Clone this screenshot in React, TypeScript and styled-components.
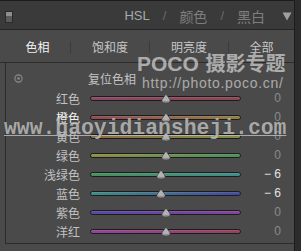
import React from 'react';
import styled, { createGlobalStyle } from 'styled-components';

const GlobalStyle = createGlobalStyle`
  html, body { margin: 0; padding: 0; width: 301px; height: 251px; overflow: hidden; background: #2c2c2c; }
  #root { width: 301px; height: 251px; }
`;

const Frame = styled.div`
  position: relative;
  width: 295px;
  height: 251px;
  box-sizing: border-box;
  border-top: 1px solid #1c1c1c;
  border-right: 1px solid #1c1c1c;
  background: #3a3a3a;
  display: flex;
  flex-direction: column;
  font-family: "Noto Sans CJK SC", "Noto Sans", sans-serif;
  overflow: hidden;
`;

const Header = styled.div`
  height: 28px;
  border-bottom: 1px solid #252525;
  display: flex;
  align-items: center;
  padding: 0 2px 0 5px;
  gap: 13px;
`;

const PanelIcon = styled.div`
  width: 8px;
  height: 12px;
  margin-top: 3px;
  box-sizing: border-box;
  border: 1px solid #2a2a2a;
  background: linear-gradient(#8e8e8e 0 45%, #5a5a5a 45% 100%);
`;

const Spacer = styled.div`
  flex: 1;
`;

const ModeLabel = styled.span<{ $active?: boolean; $latin?: boolean }>`
  font-family: ${(p) => (p.$latin ? '"Liberation Sans", Arial, sans-serif' : '"Noto Sans CJK SC", sans-serif')};
  font-size: ${(p) => (p.$latin ? '13px' : '14px')};
  color: ${(p) => (p.$active ? '#a8a8a8' : '#7e7e7e')};
  line-height: 16px;
  margin-top: 2px;
`;

const Slash = styled.span`
  font-family: "Liberation Sans", Arial, sans-serif;
  font-size: 13px;
  color: #6a6a6a;
  line-height: 16px;
  margin-top: 2px;
`;

const Caret = styled.svg`
  width: 10px;
  height: 9px;
  margin-left: 4px;
  margin-top: 3px;
`;

const Panel = styled.div`
  flex: 1;
  background: #4a4a4a;
  display: flex;
  flex-direction: column;
`;

const TabBar = styled.div`
  height: 32px;
  border-bottom: 1px solid #2c2c2c;
  padding-left: 5px;
  display: grid;
  grid-template-columns: 65px 1px 78px 1px 78px 1px 65px;
  align-items: center;
`;

const Tab = styled.div<{ $active?: boolean }>`
  text-align: center;
  font-size: 12px;
  line-height: 16px;
  margin-top: 1px;
  color: ${(p) => (p.$active ? '#f2f2f2' : '#c6c6c6')};
`;

const TabDivider = styled.div`
  height: 12px;
  margin-top: 2px;
  background: #3b3b3b;
`;

const Content = styled.div`
  margin-left: 5px;
  border-left: 1px solid #2c2c2c;
  border-bottom: 1px solid #2c2c2c;
  padding: 6px 0 3px;
`;

const ResetRow = styled.div`
  height: 19px;
  display: grid;
  grid-template-columns: 82px auto;
  align-items: center;
`;

const TargetIcon = styled.svg`
  width: 9px;
  height: 9px;
  margin-left: 8px;
`;

const ResetText = styled.span`
  font-size: 12px;
  color: #c4c4c4;
  line-height: 19px;
`;

const Row = styled.div`
  height: 19px;
  display: grid;
  grid-template-columns: 84px 151px 40px;
  align-items: center;
`;

const Label = styled.span<{ $bright?: boolean }>`
  text-align: right;
  padding-right: 10px;
  font-size: 12px;
  line-height: 19px;
  color: ${(p) => (p.$bright ? '#f4f4f4' : '#c2c2c2')};
`;

const SliderArea = styled.div`
  position: relative;
  height: 19px;
  display: flex;
  align-items: center;
  margin-top: 1px;
`;

const Track = styled.div<{ $from: string; $to: string }>`
  width: 100%;
  height: 5px;
  box-sizing: border-box;
  border: 1px solid #1c1c1c;
  border-radius: 3px;
  background: linear-gradient(90deg, ${(p) => p.$from}, ${(p) => p.$to});
  box-shadow: inset 0 1px 0 rgba(255, 255, 255, 0.1);
`;

const Thumb = styled.svg`
  position: absolute;
  top: 50%;
  width: 10px;
  height: 10px;
  transform: translate(-50%, -56%);
`;

const Value = styled.span<{ $changed?: boolean }>`
  text-align: right;
  font-family: "Liberation Sans", Arial, sans-serif;
  font-size: 12px;
  line-height: 19px;
  color: ${(p) => (p.$changed ? '#e2e2e2' : '#8a8a8a')};
`;

const WatermarkPoco = styled.div`
  position: absolute;
  left: 137px;
  top: 51px;
  white-space: nowrap;
  font-family: "Liberation Sans", Arial, sans-serif;
  font-weight: bold;
  font-size: 21px;
  line-height: 22px;
  color: rgba(240, 240, 240, 0.62);
  pointer-events: none;
`;

const PocoCjk = styled.span`
  font-family: "Noto Sans CJK SC", sans-serif;
  font-size: 20px;
  font-weight: bold;
  margin-left: 2px;
`;

const WatermarkUrl = styled.div`
  position: absolute;
  left: 142px;
  top: 75px;
  white-space: nowrap;
  font-family: "Liberation Sans", Arial, sans-serif;
  font-size: 14px;
  line-height: 14px;
  letter-spacing: 0.7px;
  color: rgba(235, 235, 235, 0.6);
  pointer-events: none;
`;

const WatermarkSite = styled.div`
  position: absolute;
  left: 4px;
  top: 116px;
  white-space: nowrap;
  font-family: "Liberation Mono", monospace;
  font-weight: bold;
  font-size: 21.4px;
  line-height: 22px;
  color: rgba(225, 225, 225, 0.7);
  text-decoration: underline;
  text-decoration-thickness: 1px;
  text-underline-offset: 1px;
  text-shadow: 0 0 1px rgba(0, 0, 0, 0.45);
  pointer-events: none;
`;

type Channel = { name: string; value: number; from: string; to: string };

const channels: Channel[] = [
  { name: '红色', value: 0, from: '#8c4766', to: '#8c4752' },
  { name: '橙色', value: 0, from: '#904758', to: '#908044' },
  { name: '黄色', value: 0, from: '#906c44', to: '#828f44' },
  { name: '绿色', value: 0, from: '#8f8c44', to: '#4c905c' },
  { name: '浅绿色', value: -6, from: '#49905c', to: '#3f8d8d' },
  { name: '蓝色', value: -6, from: '#3f8d85', to: '#4549a0' },
  { name: '紫色', value: 0, from: '#5349a4', to: '#84439c' },
  { name: '洋红', value: 0, from: '#93439c', to: '#924358' },
];

const ThumbShape = ({ pos }: { pos: number }) => (
  <Thumb viewBox="0 0 10 10" style={{ left: `${pos}%` }}>
    <path
      d="M5 0.6 L8.6 5.6 Q9.6 7.2 8.8 8.3 Q7.8 9.5 5 9.5 Q2.2 9.5 1.2 8.3 Q0.4 7.2 1.4 5.6 Z"
      fill="#b2b2b2"
      stroke="#3a3a3a"
      strokeWidth="0.7"
    />
    <path d="M2 7.6 Q5 9 8 7.6" fill="none" stroke="#808080" strokeWidth="0.8" />
  </Thumb>
);

export default function App() {
  return (
    <>
      <GlobalStyle />
      <Frame>
        <Header>
          <PanelIcon />
          <Spacer />
          <ModeLabel $active $latin>HSL</ModeLabel>
          <Slash>/</Slash>
          <ModeLabel>颜色</ModeLabel>
          <Slash>/</Slash>
          <ModeLabel>黑白</ModeLabel>
          <Caret viewBox="0 0 10 9">
            <path d="M0.5 0.5 L9.5 0.5 L5 8.5 Z" fill="#a0a0a0" />
          </Caret>
        </Header>
        <Panel>
          <TabBar>
            <Tab $active>色相</Tab>
            <TabDivider />
            <Tab>饱和度</Tab>
            <TabDivider />
            <Tab>明亮度</Tab>
            <TabDivider />
            <Tab>全部</Tab>
          </TabBar>
          <Content>
            <ResetRow>
              <TargetIcon viewBox="0 0 9 9">
                <circle cx="4.5" cy="4.5" r="3.6" fill="none" stroke="#8c8c8c" strokeWidth="1.1" />
                <circle cx="4.5" cy="4.5" r="1.3" fill="#8c8c8c" />
              </TargetIcon>
              <ResetText>复位色相</ResetText>
            </ResetRow>
            {channels.map((c) => (
              <Row key={c.name}>
                <Label $bright={c.name === '橙色'}>{c.name}</Label>
                <SliderArea>
                  <Track $from={c.from} $to={c.to} />
                  <ThumbShape pos={50 + c.value / 2} />
                </SliderArea>
                <Value $changed={c.value !== 0}>{c.value < 0 ? `− ${Math.abs(c.value)}` : c.value}</Value>
              </Row>
            ))}
          </Content>
        </Panel>
        <WatermarkPoco>
          POCO<PocoCjk> 摄影专题</PocoCjk>
        </WatermarkPoco>
        <WatermarkUrl>http://photo.poco.cn/</WatermarkUrl>
        <WatermarkSite>www.haoyidiansheji.com</WatermarkSite>
      </Frame>
    </>
  );
}
